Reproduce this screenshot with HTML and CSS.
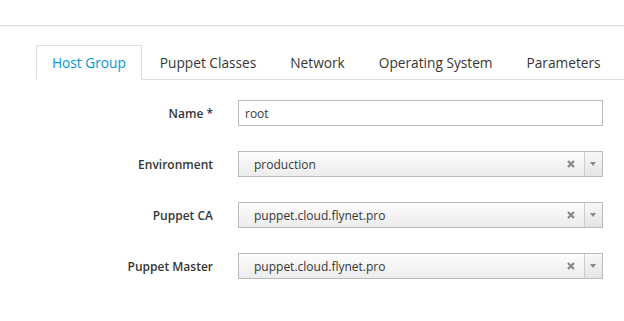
FILE: index.html
```html
<!DOCTYPE html>
<html>
<head>
<meta name="viewport" content="width=device-width, initial-scale=1">
<link rel="stylesheet" href="styles.css">
</head>
<body>
<div class="topbar"></div>
<div class="content">
  <ul class="nav-tabs">
    <li class="active"><a>Host Group</a></li>
    <li><a>Puppet Classes</a></li>
    <li><a>Network</a></li>
    <li><a>Operating System</a></li>
    <li><a>Parameters</a></li>
  </ul>
  <!-- host group form -->
  <div class="form">
    <label class="label">Name *</label>
    <input class="field" type="text" value="root">

    <label class="label">Environment</label>
    <div class="select"><span class="select-text">production</span><span class="clear"><svg width="8" height="8" viewBox="0 0 8 8"><path d="M1 1L7 7M7 1L1 7" stroke="#888" stroke-width="2.2"/></svg></span><span class="arrow"></span></div>

    <label class="label">Puppet CA</label>
    <div class="select"><span class="select-text">puppet.cloud.flynet.pro</span><span class="clear"><svg width="8" height="8" viewBox="0 0 8 8"><path d="M1 1L7 7M7 1L1 7" stroke="#888" stroke-width="2.2"/></svg></span><span class="arrow"></span></div>

    <label class="label">Puppet Master</label>
    <div class="select"><span class="select-text">puppet.cloud.flynet.pro</span><span class="clear"><svg width="8" height="8" viewBox="0 0 8 8"><path d="M1 1L7 7M7 1L1 7" stroke="#888" stroke-width="2.2"/></svg></span><span class="arrow"></span></div>
  </div>
</div>
</body>
</html>
```

FILE: styles.css
```css
* {
  box-sizing: border-box;
}
body {
  margin: 0;
  background: #fff;
  font-family: "Open Sans", "Liberation Sans", sans-serif;
  color: #363636;
}
/* thin bar on top */
.topbar {
  height: 26px;
  border-bottom: 1px solid #e2e2e2;
  box-shadow: 0 1px 1px rgba(0, 0, 0, 0.04);
}
.content {
  padding: 19px 0 0 36px;
}
/* tabs */
.nav-tabs {
  display: flex;
  margin: 0;
  padding: 0;
  list-style: none;
  border-bottom: 1px solid #ddd;
  white-space: nowrap;
}
.nav-tabs li {
  flex: none;
  margin: 0 2px -1px 0;
}
.nav-tabs a {
  display: block;
  padding: 7px 15px 6px 15px;
  font-size: 13.7px;
  line-height: 20px;
  color: #363636;
  border: 1px solid transparent;
}
.nav-tabs .active a {
  color: #0099d3;
  background: #fff;
  border-color: #ddd #ddd transparent #ddd;
}
/* form rows */
.form {
  display: grid;
  grid-template-columns: 177px 365px;
  column-gap: 25px;
  row-gap: 25px;
  align-items: center;
  padding-top: 20px;
}
.label {
  text-align: right;
  font-size: 12px;
  font-weight: 600;
  color: #363636;
}
.field {
  height: 26px;
  margin: 0;
  padding: 0 6px;
  border: 1px solid #bbb;
  font-family: inherit;
  font-size: 12px;
  color: #363636;
  outline: none;
}
.select {
  display: flex;
  align-items: center;
  height: 26px;
  border: 1px solid #bbb;
  background: linear-gradient(#fdfdfd, #ececec);
  font-size: 12px;
}
.select-text {
  flex: 1;
  padding-left: 15px;
}
.clear {
  display: flex;
  width: 26px;
  justify-content: center;
}
.arrow {
  width: 18px;
  height: 100%;
  border-left: 1px solid #ccc;
  background: linear-gradient(#f8f8f8, #e4e4e4);
  position: relative;
}
.arrow::after {
  content: "";
  position: absolute;
  left: 5px;
  top: 10px;
  border-left: 3.5px solid transparent;
  border-right: 3.5px solid transparent;
  border-top: 4px solid #888;
}
```
